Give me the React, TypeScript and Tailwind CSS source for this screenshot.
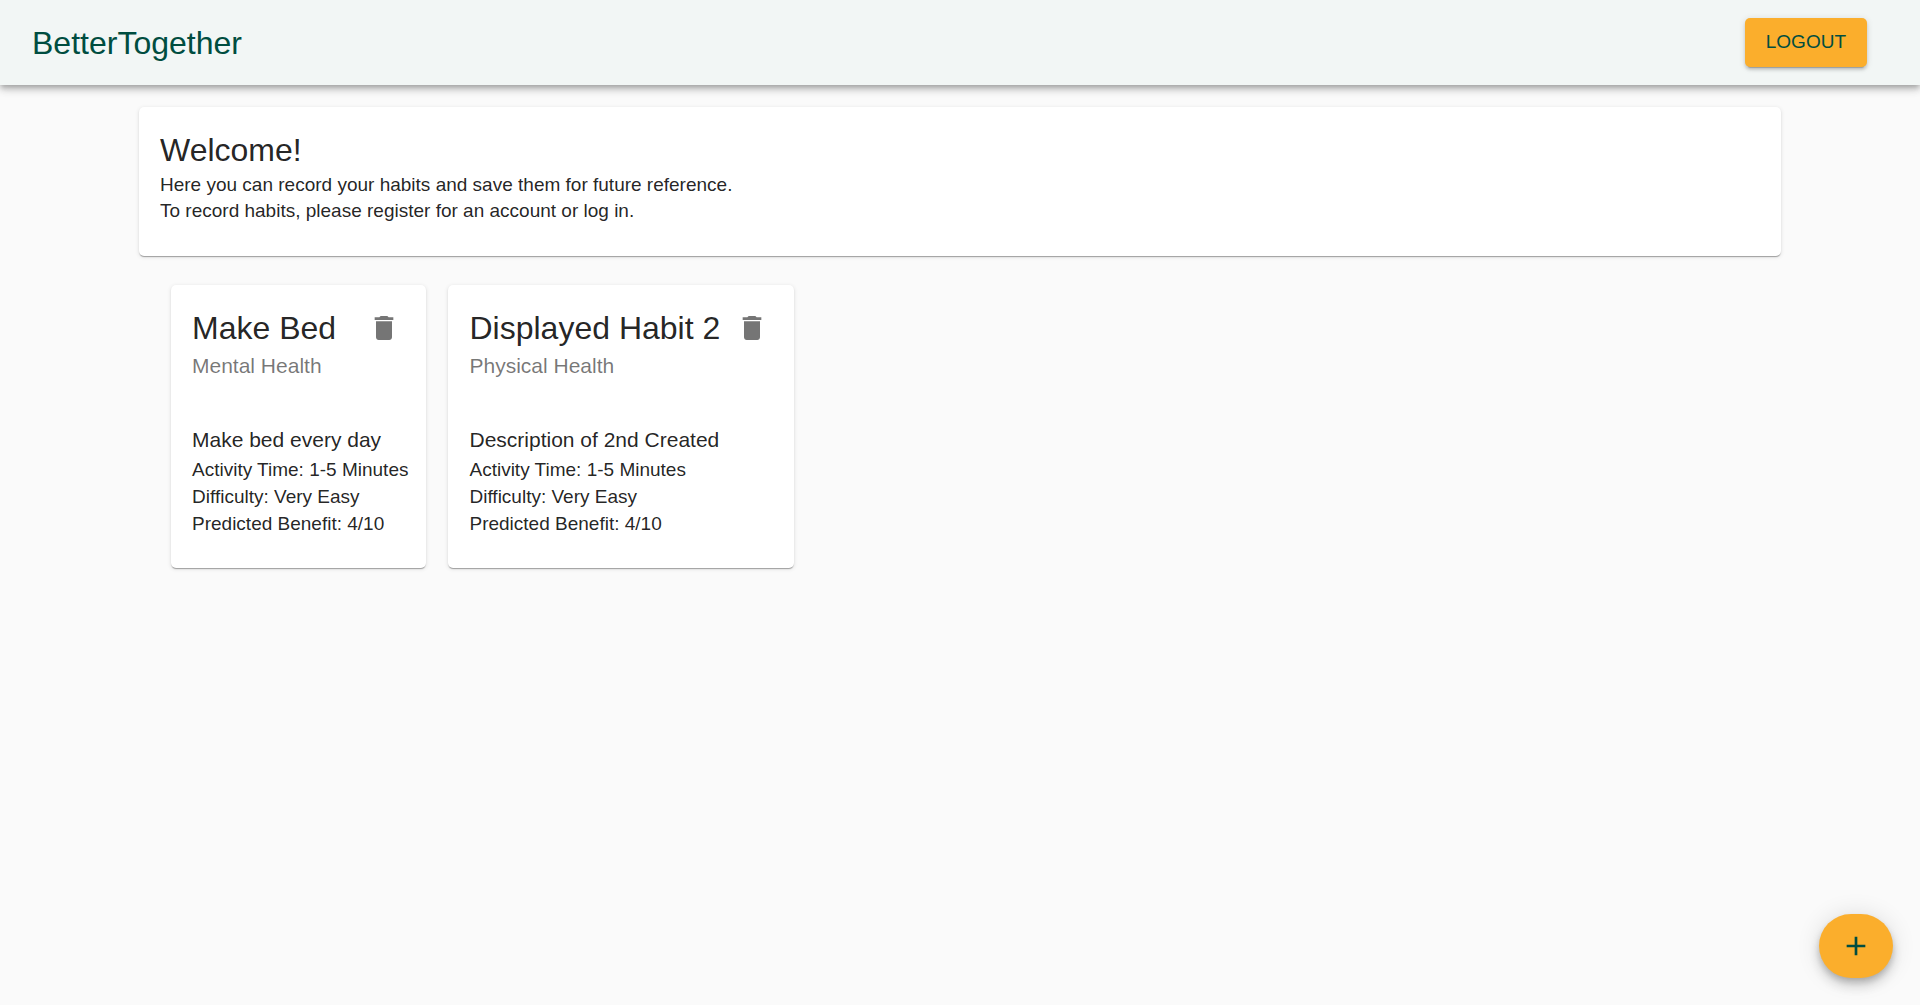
import { MdAdd, MdDelete } from "react-icons/md";

type Habit = {
  title: string;
  category: string;
  description: string;
  time: string;
  difficulty: string;
  benefit: number;
};

const habits: Habit[] = [
  {
    title: "Make Bed",
    category: "Mental Health",
    description: "Make bed every day",
    time: "1-5 Minutes",
    difficulty: "Very Easy",
    benefit: 4,
  },
  {
    title: "Displayed Habit 2",
    category: "Physical Health",
    description: "Description of 2nd Created",
    time: "1-5 Minutes",
    difficulty: "Very Easy",
    benefit: 4,
  },
];

const cardClass =
  "rounded-[5px] bg-white shadow-[0_2px_1px_-1px_rgba(0,0,0,0.2),0_1px_1px_0_rgba(0,0,0,0.14),0_1px_4px_0_rgba(0,0,0,0.12)]";

function Header() {
  return (
    <header className="flex h-[85px] items-center justify-between bg-[#f2f6f5] pr-[53px] pl-8 shadow-[0_3px_5px_-1px_rgba(0,0,0,0.2),0_5px_7px_0_rgba(0,0,0,0.14),0_1px_13px_0_rgba(0,0,0,0.12)]">
      <h1 className="text-[32px] leading-[44px] text-[#004d40]">BetterTogether</h1>
      <button
        type="button"
        className="h-[49px] rounded-[5px] bg-[#fbae2c] px-[21px] text-[19px] text-[#004d40] uppercase shadow-[0_4px_1px_-3px_rgba(0,0,0,0.2),0_3px_3px_0_rgba(0,0,0,0.14),0_1px_7px_0_rgba(0,0,0,0.12)]"
      >
        Logout
      </button>
    </header>
  );
}

function HabitCard({ habit }: { habit: Habit }) {
  return (
    <article className={cardClass}>
      <div className="flex items-start px-[21px] pt-[22px] pb-[21px]">
        <div className="flex-1">
          <h3 className="text-[32px] leading-[43px]">{habit.title}</h3>
          <p className="text-[21px] leading-8 text-black/54">{habit.category}</p>
        </div>
        <button
          type="button"
          aria-label={`Delete ${habit.title}`}
          className="-mt-[11px] -mr-[11px] rounded-full p-4 text-black/54"
        >
          <MdDelete className="size-8" />
        </button>
      </div>
      <div className="pt-[21px] pr-[18px] pb-[31px] pl-[21px] text-[19px] leading-[27px]">
        <p className="text-[21px] leading-8">{habit.description}</p>
        <p>Activity Time: {habit.time}</p>
        <p>Difficulty: {habit.difficulty}</p>
        <p>Predicted Benefit: {habit.benefit}/10</p>
      </div>
    </article>
  );
}

export default function App() {
  return (
    <div className="min-h-screen bg-[#fafafa] font-['Liberation_Sans',Arial,sans-serif] text-black/87">
      <Header />
      <main className="mx-auto max-w-[1706px] px-8 pt-[22px]">
        <section className={cardClass}>
          <div className="px-[21px] pt-[21px] pb-8 text-[19px] leading-[26px]">
            <h2 className="text-[32px] leading-[44px]">Welcome!</h2>
            <p>Here you can record your habits and save them for future reference.</p>
            <p>To record habits, please register for an account or log in.</p>
          </div>
        </section>
        <section aria-label="Habits" className="mt-[29px] flex flex-wrap gap-[22px] px-8">
          {habits.map((habit) => (
            <HabitCard key={habit.title} habit={habit} />
          ))}
        </section>
      </main>
      <button
        type="button"
        aria-label="Add habit"
        className="fixed right-[27px] bottom-[27px] flex h-16 items-center justify-center rounded-[32px] bg-[#fbae2c] px-[21px] text-[#004d40] shadow-[0_4px_7px_-1px_rgba(0,0,0,0.2),0_8px_13px_0_rgba(0,0,0,0.14),0_1px_24px_0_rgba(0,0,0,0.12)]"
      >
        <MdAdd className="size-8" />
      </button>
    </div>
  );
}
